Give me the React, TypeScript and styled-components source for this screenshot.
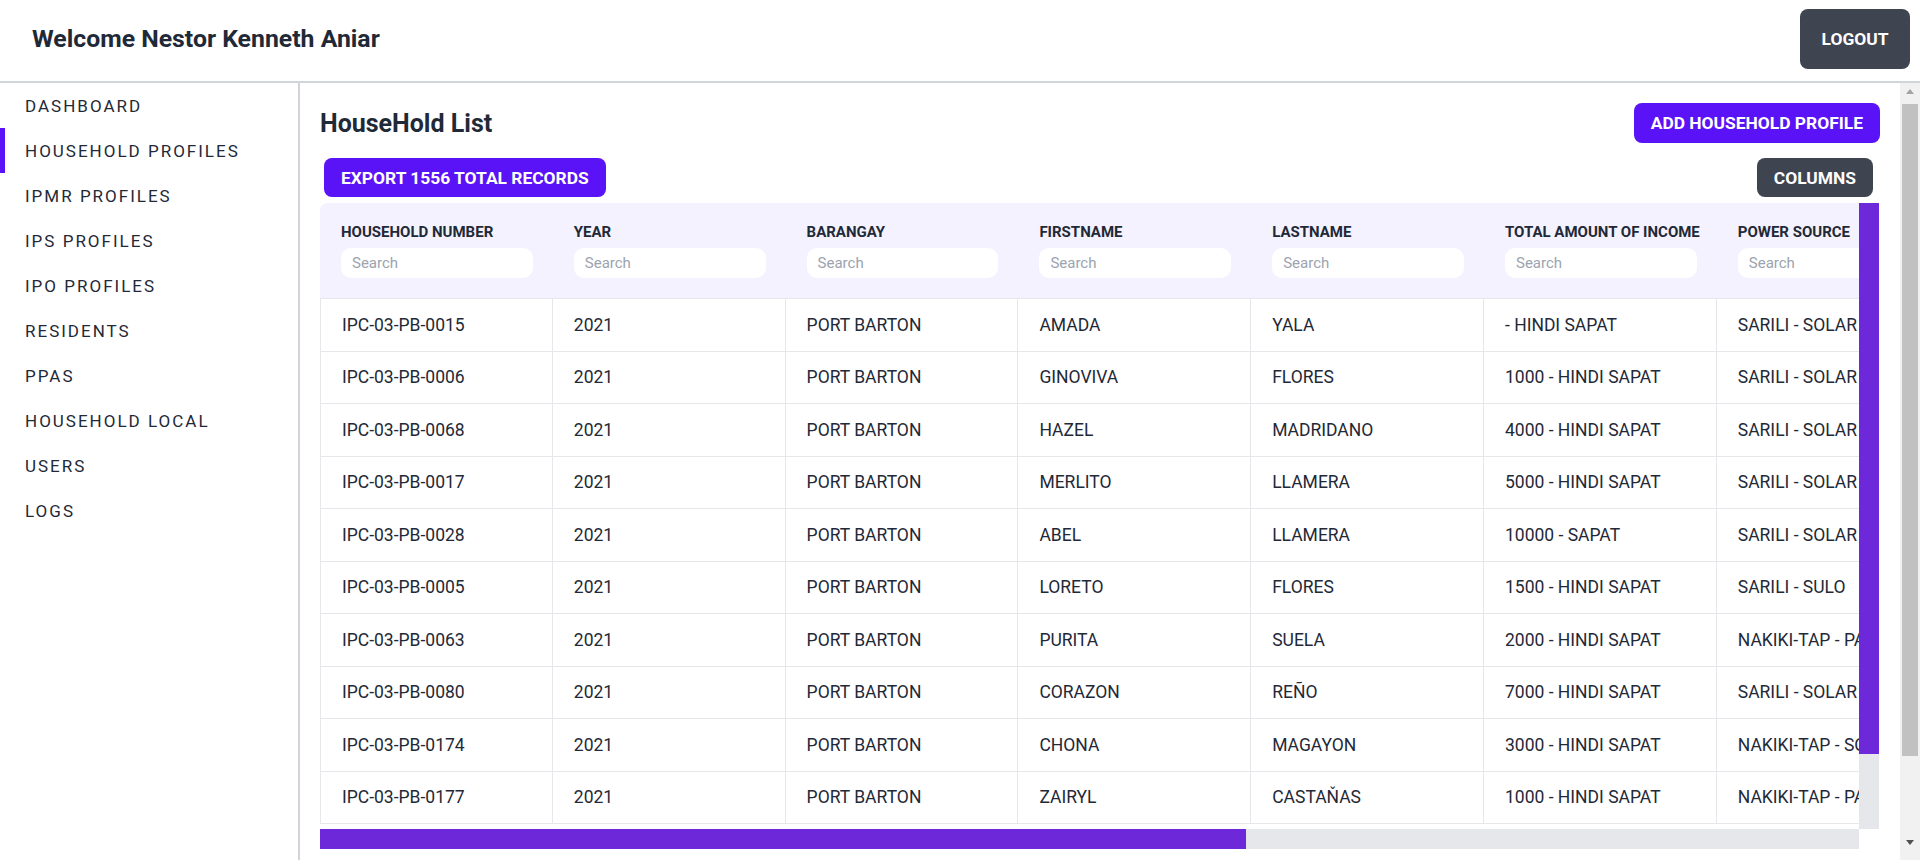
import React from "react";
import styled, { createGlobalStyle } from "styled-components";

const GlobalStyle = createGlobalStyle`
  html, body, #root {
    margin: 0;
    padding: 0;
    height: 100%;
  }
  body {
    font-family: Roboto, "Liberation Sans", Arial, sans-serif;
    color: #1f2937;
    background: #ffffff;
    overflow: hidden;
  }
  * { box-sizing: border-box; }
`;

const Page = styled.div`
  display: flex;
  flex-direction: column;
  height: 100vh;
`;

const TopBar = styled.header`
  flex: 0 0 auto;
  height: 83px;
  display: flex;
  align-items: center;
  justify-content: space-between;
  padding: 0 10px 4px 32px;
  border-bottom: 2px solid #d1d5db;
`;

const Welcome = styled.h1`
  margin: 0;
  font-size: 24.8px;
  font-weight: 700;
  color: #1f2937;
`;

const Button = styled.button<{ $variant?: "primary" | "dark" }>`
  border: none;
  cursor: pointer;
  font-family: Roboto, "Liberation Sans", Arial, sans-serif;
  font-weight: 700;
  font-size: 17.4px;
  color: #ffffff;
  text-transform: uppercase;
  border-radius: 8px;
  height: 40px;
  padding: 0 17px;
  white-space: nowrap;
  background: ${(p) => (p.$variant === "dark" ? "#3f4451" : "#5a12f6")};
`;

const LogoutButton = styled(Button)`
  height: 60px;
  width: 110px;
  padding: 0;
`;

const Body = styled.div`
  flex: 1 1 auto;
  display: flex;
  min-height: 0;
`;

const Sidebar = styled.nav`
  flex: 0 0 300px;
  border-right: 2px solid #d1d5db;
  display: flex;
  flex-direction: column;
`;

const NavItem = styled.a<{ $active?: boolean }>`
  height: 45px;
  display: flex;
  align-items: center;
  padding-left: 25px;
  font-size: 17px;
  letter-spacing: 2px;
  text-transform: uppercase;
  color: #1f2937;
  text-decoration: none;
  box-shadow: ${(p) => (p.$active ? "inset 5px 0 0 #5a12f6" : "none")};
`;

const Main = styled.main`
  flex: 1 1 auto;
  display: flex;
  min-width: 0;
`;

const MainContent = styled.div`
  flex: 1 1 auto;
  min-width: 0;
  overflow: hidden;
  padding: 20px 20px 0 20px;
`;

/* page scrollbar (drawn) */
const PageScrollbar = styled.div`
  flex: 0 0 20px;
  background: #f1f1f1;
  display: flex;
  flex-direction: column;
  align-items: center;
`;

const ScrollArrow = styled.div<{ $dir: "up" | "down"; $dim?: boolean }>`
  flex: 0 0 17px;
  width: 100%;
  display: flex;
  align-items: center;
  justify-content: center;
  margin-bottom: ${(p) => (p.$dir === "down" ? "9px" : "0")};

  &::after {
    content: "";
    width: 0;
    height: 0;
    border-left: 4.5px solid transparent;
    border-right: 4.5px solid transparent;
    ${(p) =>
      p.$dir === "up"
        ? `border-bottom: 5px solid ${p.$dim ? "#a3a3a3" : "#505050"};`
        : `border-top: 5px solid ${p.$dim ? "#a3a3a3" : "#505050"};`}
  }
`;

const PageThumb = styled.div`
  margin-top: 4px;
  width: 16px;
  height: 652px;
  background: #c1c1c1;
`;

const PageTrackRest = styled.div`
  flex: 1 1 auto;
`;

const TitleRow = styled.div`
  display: flex;
  align-items: center;
  justify-content: space-between;
  height: 40px;
`;

const Title = styled.h2`
  margin: 0;
  font-size: 25px;
  font-weight: 700;
  color: #1f2937;
`;

const Toolbar = styled.div`
  margin-top: 15px;
  display: flex;
  justify-content: space-between;
  align-items: center;
  padding: 0 7px 0 4px;

  & > button {
    height: 39px;
  }
`;

/* table frame with drawn scrollbars */
const TableFrame = styled.div`
  margin-top: 6px;
  display: grid;
  grid-template-columns: 1539px 20px;
  grid-template-rows: 626px 20px;
`;

const Viewport = styled.div`
  overflow: hidden;
`;

const VScroll = styled.div`
  background: #e5e7eb;
  display: flex;
  flex-direction: column;
`;

const HScroll = styled.div`
  background: #e5e7eb;
  display: flex;
`;

const Thumb = styled.div`
  background: #6d28d9;
  flex: 0 0 auto;
`;

const Corner = styled.div`
  background: #ffffff;
`;

const Table = styled.table`
  table-layout: fixed;
  width: ${11 * 232.8}px;
  border-collapse: separate;
  border-spacing: 0;
`;

const HeadCell = styled.th`
  width: 232.8px;
  background: #f4f2fe;
  text-align: left;
  vertical-align: top;
  padding: 21px 20px 20px 21px;
  border-bottom: 1px solid #e5e7eb;

  &:first-child {
    border-top-left-radius: 8px;
  }
`;

const HeadLabel = styled.div`
  font-size: 15px;
  font-weight: 700;
  line-height: 17px;
  color: #1f2937;
  white-space: nowrap;
  text-transform: uppercase;
`;

const SearchInput = styled.input`
  display: block;
  margin-top: 7px;
  width: 100%;
  height: 30px;
  border: none;
  outline: none;
  border-radius: 10px;
  background: #ffffff;
  padding: 0 11px;
  font-family: Roboto, "Liberation Sans", Arial, sans-serif;
  font-size: 15px;
  color: #1f2937;

  &::placeholder {
    color: #9ca3af;
  }
`;

const Cell = styled.td`
  height: 52.5px;
  padding: 0 21px;
  font-size: 17.5px;
  color: #1f2937;
  white-space: nowrap;
  overflow: hidden;
  border-right: 1px solid #e5e7eb;
  border-bottom: 1px solid #e5e7eb;

  &:first-child {
    border-left: 1px solid #e5e7eb;
  }
`;

const columns = [
  "Household Number",
  "Year",
  "Barangay",
  "Firstname",
  "Lastname",
  "Total Amount of Income",
  "Power Source",
  "Water Source",
  "Toilet Facility",
  "House Material",
  "No. of Members",
];

const rows: string[][] = [
  ["IPC-03-PB-0015", "2021", "PORT BARTON", "AMADA", "YALA", "- HINDI SAPAT", "SARILI - SOLAR", "POSO", "MERON", "KAWAYAN", "5"],
  ["IPC-03-PB-0006", "2021", "PORT BARTON", "GINOVIVA", "FLORES", "1000 - HINDI SAPAT", "SARILI - SOLAR", "POSO", "MERON", "KAWAYAN", "4"],
  ["IPC-03-PB-0068", "2021", "PORT BARTON", "HAZEL", "MADRIDANO", "4000 - HINDI SAPAT", "SARILI - SOLAR", "BUKAL", "WALA", "KAHOY", "6"],
  ["IPC-03-PB-0017", "2021", "PORT BARTON", "MERLITO", "LLAMERA", "5000 - HINDI SAPAT", "SARILI - SOLAR", "POSO", "MERON", "KAWAYAN", "3"],
  ["IPC-03-PB-0028", "2021", "PORT BARTON", "ABEL", "LLAMERA", "10000 - SAPAT", "SARILI - SOLAR", "GRIPO", "MERON", "SEMENTO", "5"],
  ["IPC-03-PB-0005", "2021", "PORT BARTON", "LORETO", "FLORES", "1500 - HINDI SAPAT", "SARILI - SULO", "BUKAL", "WALA", "KAWAYAN", "7"],
  ["IPC-03-PB-0063", "2021", "PORT BARTON", "PURITA", "SUELA", "2000 - HINDI SAPAT", "NAKIKI-TAP - PANEL", "POSO", "MERON", "KAHOY", "4"],
  ["IPC-03-PB-0080", "2021", "PORT BARTON", "CORAZON", "REÑO", "7000 - HINDI SAPAT", "SARILI - SOLAR", "POSO", "MERON", "KAWAYAN", "2"],
  ["IPC-03-PB-0174", "2021", "PORT BARTON", "CHONA", "MAGAYON", "3000 - HINDI SAPAT", "NAKIKI-TAP - SOLAR", "BUKAL", "WALA", "KAWAYAN", "6"],
  ["IPC-03-PB-0177", "2021", "PORT BARTON", "ZAIRYL", "CASTAŇAS", "1000 - HINDI SAPAT", "NAKIKI-TAP - PANEL", "POSO", "MERON", "KAHOY", "3"],
];

const navItems = [
  "Dashboard",
  "Household Profiles",
  "IPMR Profiles",
  "IPS Profiles",
  "IPO Profiles",
  "Residents",
  "PPAS",
  "Household Local",
  "Users",
  "Logs",
];

const scroll = { vThumb: 551, hThumb: 926 };

export default function App() {
  return (
    <>
      <GlobalStyle />
      <Page>
        <TopBar>
          <Welcome>Welcome Nestor Kenneth Aniar</Welcome>
          <LogoutButton $variant="dark">Logout</LogoutButton>
        </TopBar>
        <Body>
          <Sidebar>
            {navItems.map((item) => (
              <NavItem key={item} href="#" $active={item === "Household Profiles"}>
                {item}
              </NavItem>
            ))}
          </Sidebar>
          <Main>
            <MainContent>
              <TitleRow>
                <Title>HouseHold List</Title>
                <Button>Add Household Profile</Button>
              </TitleRow>
              <Toolbar>
                <Button>Export 1556 Total Records</Button>
                <Button $variant="dark">Columns</Button>
              </Toolbar>
              <TableFrame>
                <Viewport>
                  <Table>
                    <thead>
                      <tr>
                        {columns.map((c) => (
                          <HeadCell key={c}>
                            <HeadLabel>{c}</HeadLabel>
                            <SearchInput placeholder="Search" />
                          </HeadCell>
                        ))}
                      </tr>
                    </thead>
                    <tbody>
                      {rows.map((r) => (
                        <tr key={r[0]}>
                          {r.map((v, i) => (
                            <Cell key={i}>{v}</Cell>
                          ))}
                        </tr>
                      ))}
                    </tbody>
                  </Table>
                </Viewport>
                <VScroll>
                  <Thumb style={{ height: scroll.vThumb }} />
                </VScroll>
                <HScroll>
                  <Thumb style={{ width: scroll.hThumb }} />
                </HScroll>
                <Corner />
              </TableFrame>
            </MainContent>
            <PageScrollbar>
              <ScrollArrow $dir="up" $dim />
              <PageThumb />
              <PageTrackRest />
              <ScrollArrow $dir="down" />
            </PageScrollbar>
          </Main>
        </Body>
      </Page>
    </>
  );
}
